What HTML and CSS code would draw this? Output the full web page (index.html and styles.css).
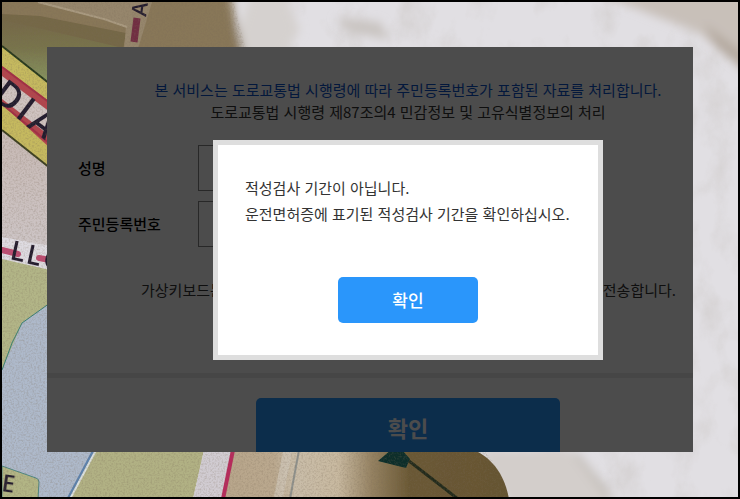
FILE: index.html
```html
<!DOCTYPE html>
<html lang="ko">
<head>
<meta charset="utf-8">
<meta name="viewport" content="width=device-width, initial-scale=1">
<title>적성검사 기간 확인</title>
<link rel="stylesheet" href="styles.css">
</head>
<body>
<div class="frame">
  <svg class="backdrop" viewBox="2 2 736 495" preserveAspectRatio="xMidYMid slice" aria-hidden="true">
    <defs>
      <filter id="soft" x="-10%" y="-10%" width="120%" height="120%"><feGaussianBlur stdDeviation="5"/></filter>
      <filter id="edge"><feGaussianBlur stdDeviation="0.5"/></filter>
      <filter id="grain" x="0" y="0" width="100%" height="100%">
        <feTurbulence type="fractalNoise" baseFrequency="0.55" numOctaves="2" seed="4"/>
        <feColorMatrix values="0 0 0 0 0.2  0 0 0 0 0.15  0 0 0 0 0.1  1.6 0 0 0 -0.68"/>
      </filter>
      <filter id="cloud" x="0" y="0" width="100%" height="100%">
        <feTurbulence type="fractalNoise" baseFrequency="0.03 0.022" numOctaves="5" seed="9"/>
        <feColorMatrix values="0 0 0 0 0.58  0 0 0 0 0.55  0 0 0 0 0.53  2.2 0 0 0 -1.02"/>
      </filter>
      <clipPath id="map-area"><path d="M0 0H233L249 60V440H474C494 459 505 477 509 499H0Z"/></clipPath>
      <linearGradient id="meadow" x1="0" y1="0" x2="0" y2="1">
        <stop offset="0" stop-color="#756848"/><stop offset="0.45" stop-color="#78744c"/><stop offset="1" stop-color="#879560"/>
      </linearGradient>
      <linearGradient id="shore" x1="0" y1="0" x2="1" y2="0">
        <stop offset="0" stop-color="#b8a68b"/><stop offset="0.18" stop-color="#baa88e"/><stop offset="0.25" stop-color="#c9bda9"/>
        <stop offset="0.4" stop-color="#c8b9a0"/><stop offset="0.52" stop-color="#958262"/><stop offset="0.65" stop-color="#6b5935"/><stop offset="1" stop-color="#655432"/>
      </linearGradient>
      <linearGradient id="paper" x1="0" y1="0" x2="0" y2="1">
        <stop offset="0" stop-color="#c7b9b4"/><stop offset="1" stop-color="#cdc5c6"/>
      </linearGradient>
    </defs>
    <rect x="0" y="0" width="740" height="499" fill="#e1dfe3"/>
    <rect x="230" y="0" width="510" height="499" filter="url(#cloud)" opacity="0.5"/>
    <g filter="url(#soft)">
      <path d="M595-8L750-8V74L724 54L698 32L655 16Z" fill="#c8c0b9"/>
      <path d="M704 24L750 58V76L716 46Z" fill="#b3a89e"/>
      <path d="M335 18L380 22L390 40L350 32Z" fill="#c9c4c1"/>
      <path d="M560 458L602 499H616L578 452Z" fill="#c6c1bc"/>
      <path d="M480 450L570 450L610 505H510Z" fill="#d3cecb"/>
      <path d="M250-5L285-5L300 30L280 60L230 55Z" fill="#d5d1cf"/>
      <path d="M-10-10H230L236 22L245 60H-10Z" fill="#887758"/>
    </g>
    <g filter="url(#edge)">
      <path d="M2 14L40 16L126 33L123 50H2Z" fill="#756747"/>
      <path d="M2 20L47 30L123 48V82H47L2 46Z" fill="url(#meadow)"/>
      <path d="M38 2H152L138 49H124L126 27L104 18Z" fill="#96866c"/>
      <path d="M38 2L104 19L127 27" fill="none" stroke="#a99a80" stroke-width="2"/>
      <path d="M2 46L50 84V170L2 132Z" fill="#c5b95e"/>
      <path d="M2 66L50 102V148L2 104Z" fill="#b3444d"/>
      <path d="M2 76L50 112V136L2 99Z" fill="#cfc3c0"/>
      <path d="M2 46L50 84" stroke="#26391d" stroke-width="2"/>
      <path d="M2 67L50 103M2 104L50 144" stroke="#a32e45" stroke-width="2"/>
      <path d="M2 130L50 168V250H2Z" fill="url(#paper)"/>
      <path d="M2 130L50 168" stroke="#3c4020" stroke-width="2"/>
      <path d="M2 237L50 246V272L2 260Z" fill="#dedbe1"/>
      <path d="M2 250L18 254M39 258L50 260" stroke="#bd4e72" stroke-width="6" stroke-linecap="round"/>
      <path d="M2 259L50 270V400H2Z" fill="#b2b587"/>
      <path d="M50 303L22 323L2 370V499H70L100 445Z" fill="#aeb9ca"/>
      <path d="M50 303L22 323L12 343L2 370" fill="none" stroke="#388078"/>
      <path d="M2 466L36 478Q39 479 39 482L38 499H2Z" fill="#b2b585" stroke="#4e8581"/>
      <path d="M93 450H204L193 499H68Z" fill="#b1b184"/>
      <path d="M94 450L68 499" stroke="#5d82ad" stroke-width="3"/>
      <path d="M96 450L70 499" stroke="#dce1e0" stroke-width="2"/>
      <path d="M204 450H234L224 499H193Z" fill="#d1ccd2"/>
      <path d="M233 450H474C494 459 505 477 509 499H223Z" fill="url(#shore)"/>
      <path d="M233 450L223 499" stroke="#b72c5b" stroke-width="4"/>
      <path d="M288 450L278 499" stroke="#d1c9bd" stroke-width="9" opacity="0.6"/>
      <path d="M299 450L290 499" stroke="#8f918c" stroke-width="2"/>
      <path d="M378 461L391 450H402L410 459L406 468Z" fill="#082f2b"/>
      <path d="M409 461L458 499" stroke="#242c1b" stroke-width="3"/>
      <path d="M137 18L134 42" stroke="#712d43" stroke-width="7"/>
    </g>
    <g class="map-letters" filter="url(#edge)">
      <text transform="translate(146 17) rotate(-82)" font-size="21">A</text>
      <text transform="translate(-9 98) rotate(37)" font-size="36">D</text>
      <text transform="translate(14 116) rotate(37)" font-size="36">I</text>
      <text transform="translate(26 126) rotate(37)" font-size="36">A</text>
      <text transform="translate(9 259) rotate(12)" font-size="27">L</text>
      <text transform="translate(25 263) rotate(12)" font-size="27">L</text>
      <text transform="translate(42 267) rotate(12)" font-size="27">O</text>
      <text transform="translate(1 491) rotate(8)" font-size="23">E</text>
    </g>
    <g clip-path="url(#map-area)">
      <rect x="0" y="0" width="510" height="499" filter="url(#grain)" opacity="0.4"/>
    </g>
  </svg>

  <main class="panel">
    <form class="service">
      <div class="notice">
        <p class="notice-lead">본 서비스는 도로교통법 시행령에 따라 주민등록번호가 포함된 자료를 처리합니다.</p>
        <p>도로교통법 시행령 제87조의4 민감정보 및 고유식별정보의 처리</p>
      </div>
      <div class="fields">
        <label for="name">성명</label>
        <input id="name" type="text">
        <label for="rrn">주민등록번호</label>
        <input id="rrn" type="text">
      </div>
      <p class="keyboard-note"><span>가상키보드는</span><span>전송합니다.</span></p>
      <div class="actions">
        <button class="button button-large" type="button">확인</button>
      </div>
    </form>

    <div class="overlay">
      <section class="dialog" role="dialog" aria-modal="true" aria-describedby="message">
        <p id="message">적성검사 기간이 아닙니다.<br>운전면허증에 표기된 적성검사 기간을 확인하십시오.</p>
        <button class="button" type="button">확인</button>
      </section>
    </div>
  </main>
</div>
</body>
</html>
```

FILE: styles.css
```css
* {
  box-sizing: border-box;
}

body {
  margin: 0;
  color: #333;
  font-family: "Noto Sans CJK KR", "Noto Sans", sans-serif;
  font-size: 15px;
  line-height: 22px;
}

p {
  margin: 0;
}

.frame {
  position: relative;
  display: flex;
  height: 100vh;
  padding: 45px;
  border: 2px solid #000;
  overflow: hidden;
}

.backdrop {
  position: absolute;
  inset: 0;
  width: 100%;
  height: 100%;
}

.map-letters {
  fill: #241b2d;
  font-family: "Open Sans", "Noto Sans", sans-serif;
  font-weight: 600;
}

.panel {
  position: relative;
  flex: 1;
  min-width: 0;
  background: #fff;
  overflow: hidden;
}

.service {
  padding-top: 32px;
  white-space: nowrap;
}

.notice {
  padding-left: 76px;
  text-align: center;
}

.notice-lead {
  color: #0d53c8;
}

.fields {
  display: grid;
  grid-template-columns: 120px minmax(0, 380px);
  gap: 10px 0;
  align-items: center;
  margin-top: 22px;
  padding-left: 31px;
}

.fields label {
  color: #000;
  font-weight: 500;
}

.fields input {
  width: 100%;
  height: 46px;
  padding: 0 12px;
  border: 1px solid #888;
  background: #fff;
  font: inherit;
}

.keyboard-note {
  display: flex;
  justify-content: space-between;
  margin: 32px 17px 0 94px;
}

.actions {
  display: flex;
  justify-content: center;
  margin-top: 72px;
  padding: 20px 0 20px 76px;
  border-top: 5px solid #e9e9e9;
}

.button {
  width: 140px;
  height: 46px;
  padding: 0;
  border: 0;
  border-radius: 5px;
  background: #2a96fb;
  color: #fff;
  font-family: inherit;
  font-size: 17px;
  font-weight: 500;
}

.button-large {
  width: 304px;
  height: 58px;
  font-size: 22px;
  font-weight: 700;
}

.overlay {
  position: absolute;
  inset: 0;
  display: grid;
  place-items: center;
  padding-left: 76px;
  background: rgba(0, 0, 0, 0.7);
}

.dialog {
  display: flex;
  flex-direction: column;
  align-items: center;
  gap: 50px;
  width: 390px;
  padding: 30px 27px 32px;
  border: 5px solid #dedede;
  background: #fff;
  line-height: 26px;
}

.dialog p {
  align-self: stretch;
  white-space: nowrap;
}
```
